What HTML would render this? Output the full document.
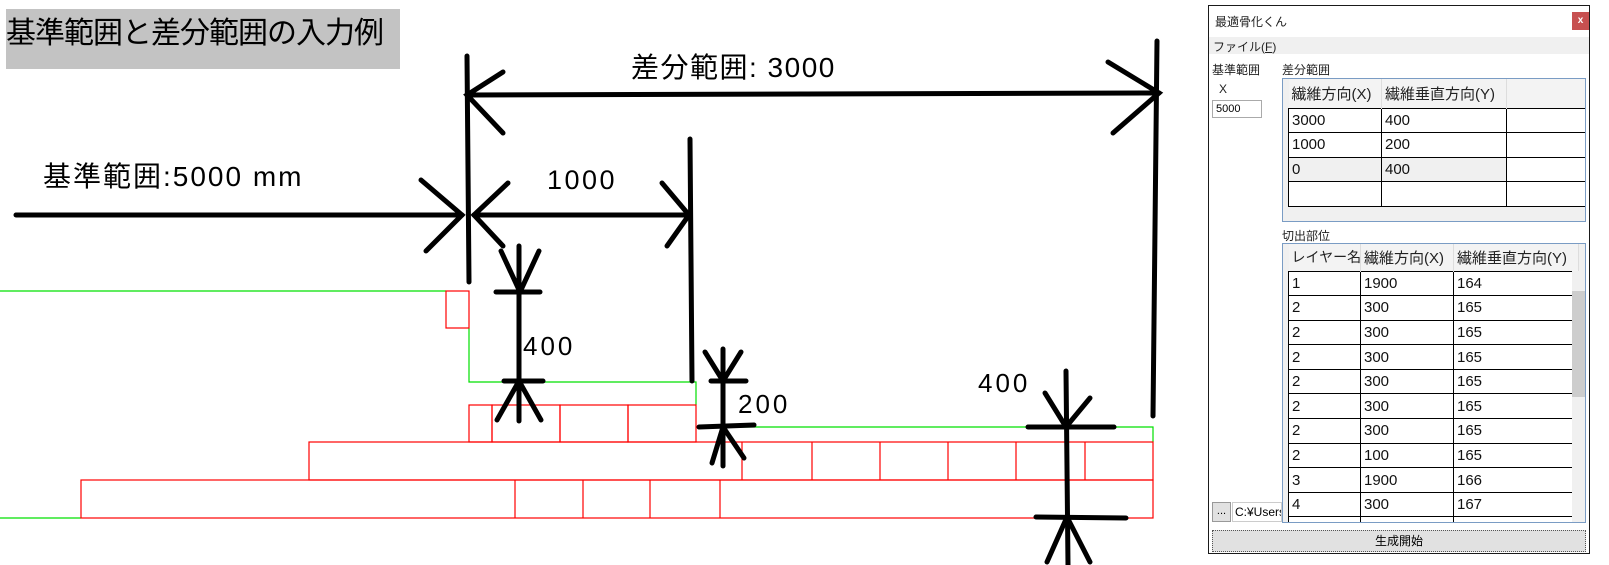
<!DOCTYPE html>
<html><head><meta charset="utf-8"><style>
*{margin:0;padding:0;box-sizing:border-box}
body{width:1609px;height:565px;background:#fff;position:relative;overflow:hidden;font-family:"Liberation Sans","Noto Sans CJK JP",sans-serif}
.a{position:absolute;white-space:nowrap}
.win{position:absolute;left:1208px;top:5px;width:382px;height:549px;border:1px solid #1a1a1a;background:#fff}
.s{font-size:12px;color:#222}
table{border-collapse:collapse;position:absolute;font-size:15px;table-layout:fixed}
td{border:1px solid #000;padding:0 0 0 3px;height:24.6px;background:#fff;color:#111;overflow:hidden}
th{font-weight:normal;text-align:left;padding:0 0 0 3px;background:#f3f3f3;border-right:1px solid #ddd;color:#222;font-size:15px;overflow:hidden}
</style></head><body>
<div class="a" style="left:6px;top:9px;width:394px;height:60px;background:#c3c3c3"></div>
<div class="a" style="left:6px;top:16px;font-size:30px;line-height:36px;color:#000;letter-spacing:-1px">基準範囲と差分範囲の入力例</div>
<div class="a" style="left:43px;top:160px;font-size:28px;line-height:34px;letter-spacing:2px">基準範囲:5000 mm</div>
<div class="a" style="left:631px;top:51px;font-size:28px;line-height:34px;letter-spacing:1.5px">差分範囲: 3000</div>
<div class="a" style="left:547px;top:164px;font-size:27px;line-height:32px;letter-spacing:2.5px">1000</div>
<div class="a" style="left:523px;top:330px;font-size:26px;line-height:32px;letter-spacing:3px">400</div>
<div class="a" style="left:738px;top:388px;font-size:26px;line-height:32px;letter-spacing:3px">200</div>
<div class="a" style="left:978px;top:367px;font-size:26px;line-height:32px;letter-spacing:3px">400</div>
<svg class="a" style="left:0;top:0" width="1200" height="565">
<g fill="none" stroke-width="1.2">
<polyline stroke="#00e000" points="0,291 446,291"/>
<polyline stroke="#00e000" points="469,328 469,382 696,382 696,405"/>
<polyline stroke="#00e000" points="727,427 1153,427 1153,442"/>
<polyline stroke="#00e000" points="0,518 81,518"/>
<g stroke="#f00">
<rect x="446" y="291" width="23" height="37"/>
<rect x="469" y="405" width="23" height="37"/>
<rect x="492" y="405" width="68" height="37"/>
<rect x="560" y="405" width="68" height="37"/>
<rect x="628" y="405" width="68" height="37"/>
<rect x="309" y="442" width="844" height="38"/>
<line x1="742" y1="442" x2="742" y2="480"/><line x1="812" y1="442" x2="812" y2="480"/><line x1="880" y1="442" x2="880" y2="480"/><line x1="948" y1="442" x2="948" y2="480"/><line x1="1016" y1="442" x2="1016" y2="480"/><line x1="1085" y1="442" x2="1085" y2="480"/>
<rect x="81" y="480" width="1072" height="38"/>
<line x1="515" y1="480" x2="515" y2="518"/><line x1="583" y1="480" x2="583" y2="518"/><line x1="650" y1="480" x2="650" y2="518"/><line x1="720" y1="480" x2="720" y2="518"/>
</g></g>
<g stroke="#000" stroke-width="5" stroke-linecap="round" fill="none">
<line x1="16" y1="215" x2="462" y2="215"/>
<polyline points="421,180 462,215 426,251"/>
<line x1="467" y1="56" x2="469" y2="282"/>
<line x1="467" y1="95" x2="1159" y2="93"/>
<polyline points="503,72 467,95 503,133"/>
<polyline points="1108,62 1159,93 1113,133"/>
<line x1="1157" y1="41" x2="1153" y2="416"/>
<line x1="474" y1="215" x2="689" y2="215"/>
<polyline points="508,183 474,215 503,246"/>
<polyline points="662,183 689,215 667,246"/>
<line x1="690" y1="139" x2="692" y2="381"/>
<line x1="519" y1="246" x2="519" y2="421"/>
<polyline points="501,251 520,292 539,251"/>
<line x1="496" y1="292" x2="540" y2="292"/>
<line x1="504" y1="381" x2="543" y2="381"/>
<polyline points="497,420 519,381 541,420"/>
<line x1="723" y1="349" x2="723" y2="466"/>
<polyline points="705,352 723,381 741,352"/>
<line x1="711" y1="381" x2="746" y2="381"/>
<line x1="699" y1="427" x2="754" y2="425"/>
<polyline points="712,463 723,427 744,458"/>
<line x1="1066" y1="371" x2="1068" y2="565"/>
<polyline points="1045,393 1066,427 1090,398"/>
<line x1="1028" y1="427" x2="1114" y2="427"/>
<line x1="1036" y1="517" x2="1126" y2="518"/>
<polyline points="1047,562 1067,517 1090,562"/>
</g>
</svg>
<div class="win"></div>
<div class="a s" style="left:1215px;top:13px">最適骨化くん</div>
<div class="a" style="left:1572px;top:12px;width:17px;height:18px;background:#c75050;color:#fff;font-size:10px;text-align:center;line-height:18px;font-weight:bold">x</div>
<div class="a" style="left:1209px;top:37px;width:380px;height:17px;background:#f0f0f0"></div>
<div class="a s" style="left:1213px;top:38px">ファイル(<u>F</u>)</div>
<div class="a s" style="left:1212px;top:61px">基準範囲</div>
<div class="a s" style="left:1219px;top:82px">X</div>
<div class="a" style="left:1212px;top:100px;width:50px;height:18px;border:1px solid #aaa;font-size:11px;line-height:16px;padding-left:3px">5000</div>
<div class="a s" style="left:1282px;top:61px">差分範囲</div>
<div class="a" style="left:1282px;top:78px;width:304px;height:144px;border:1px solid #7a9cc4;background:#f0f0f0;overflow:hidden">
<table style="left:5px;top:0;width:308px">
<colgroup><col style="width:93px"><col style="width:125px"><col style="width:90px"></colgroup>
<tr><th style="height:29px">繊維方向(X)</th><th>繊維垂直方向(Y)</th><th style="border:none"></th></tr>
<tr><td>3000</td><td>400</td><td></td></tr>
<tr><td>1000</td><td>200</td><td></td></tr>
<tr><td style="background:#f0f0f0">0</td><td style="background:#f0f0f0">400</td><td></td></tr>
<tr><td></td><td></td><td></td></tr>
</table></div>
<div class="a s" style="left:1282px;top:227px">切出部位</div>
<div class="a" style="left:1282px;top:243px;width:304px;height:280px;border:1px solid #7a9cc4;background:#f0f0f0;overflow:hidden">
<table style="left:5px;top:0;width:290px">
<colgroup><col style="width:72px"><col style="width:93px"><col style="width:125px"></colgroup>
<tr><th style="height:27px;font-size:14px">レイヤー名</th><th>繊維方向(X)</th><th>繊維垂直方向(Y)</th></tr>
<tr><td>1</td><td>1900</td><td>164</td></tr>
<tr><td>2</td><td>300</td><td>165</td></tr>
<tr><td>2</td><td>300</td><td>165</td></tr>
<tr><td>2</td><td>300</td><td>165</td></tr>
<tr><td>2</td><td>300</td><td>165</td></tr>
<tr><td>2</td><td>300</td><td>165</td></tr>
<tr><td>2</td><td>300</td><td>165</td></tr>
<tr><td>2</td><td>100</td><td>165</td></tr>
<tr><td>3</td><td>1900</td><td>166</td></tr>
<tr><td>4</td><td>300</td><td>167</td></tr>
<tr><td></td><td></td><td></td></tr>
</table>
<div class="a" style="left:289px;top:27px;width:14px;height:252px;background:#f0f0f0"></div>
<div class="a" style="left:289px;top:47px;width:14px;height:106px;background:#cdcdcd"></div>
</div>
<div class="a" style="left:1212px;top:502px;width:19px;height:20px;background:#e1e1e1;border:1px solid #999;font-size:11px;text-align:center;line-height:16px">...</div>
<div class="a" style="left:1232px;top:502px;width:50px;height:20px;border:1px solid #ccc;font-size:12px;line-height:18px;padding-left:2px;overflow:hidden">C:¥Users</div>
<div class="a" style="left:1212px;top:530px;width:374px;height:22px;background:#e1e1e1;border:1px dotted #555;font-size:12px;text-align:center;line-height:20px">生成開始</div>
</body></html>
